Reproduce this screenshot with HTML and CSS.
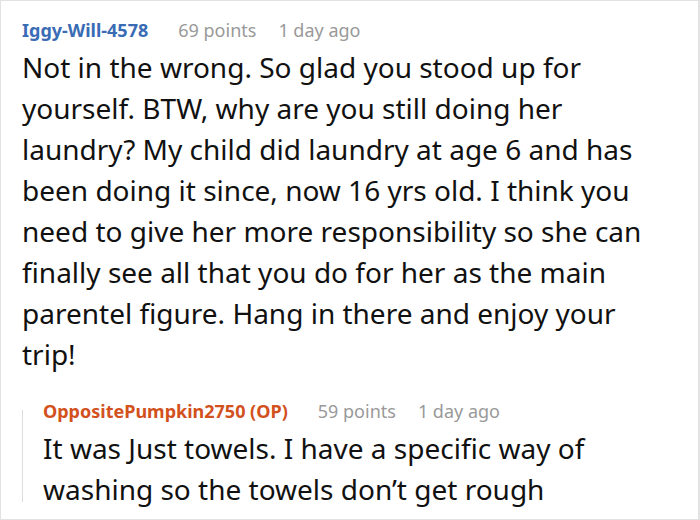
FILE: index.html
```html
<!DOCTYPE html>
<html>
<head>
<meta charset="utf-8">
<link rel="stylesheet" href="styles.css">
</head>
<body>
<div class="frame">
  <div class="comment">
    <div class="meta">
      <span class="user">Iggy-Will-4578</span>
      <span class="info">69 points</span>
      <span class="info">1 day ago</span>
    </div>
    <p class="text">Not in the wrong. So glad you stood up for yourself. BTW, why are you still doing her laundry? My child did laundry at age 6 and has been doing it since, now 16 yrs old. I think you need to give her more responsibility so she can finally see all that you do for her as the main parentel figure. Hang in there and enjoy your trip!</p>
    <div class="reply">
      <div class="meta">
        <span class="user op">OppositePumpkin2750 (OP)</span>
        <span class="info">59 points</span>
        <span class="info">1 day ago</span>
      </div>
      <p class="text">It was Just towels. I have a specific way of washing so the towels don’t get rough</p>
    </div>
  </div>
</div>
</body>
</html>
```
FILE: styles.css
```css
html, body {
  margin: 0;
  padding: 0;
  background: #fff;
}
.frame {
  width: 700px;
  height: 520px;
  box-sizing: border-box;
  border: 1px solid #e2e2e2;
  border-right-width: 2px;
  overflow: hidden;
  font-family: "Noto Sans", sans-serif;
}
.comment {
  padding: 15px 0 0 21px;
}
.meta {
  display: flex;
  gap: 22px;
  font-size: 18px;
  line-height: 28px;
}
.user {
  font-weight: 700;
  color: #3a6bb5;
  margin-right: 8px;
}
.user.op {
  color: #d2511d;
}
.info {
  color: #999;
}
.text {
  margin: 3px 0 0;
  font-size: 28px;
  line-height: 41px;
  color: #111;
  width: 645px;
}
.reply {
  position: relative;
  margin-top: 22px;
  padding-left: 21px;
}
.reply::before {
  content: "";
  position: absolute;
  left: 0;
  top: 13px;
  bottom: 8px;
  width: 1px;
  background: #ddd;
}
.reply .text {
  width: 624px;
}
```
